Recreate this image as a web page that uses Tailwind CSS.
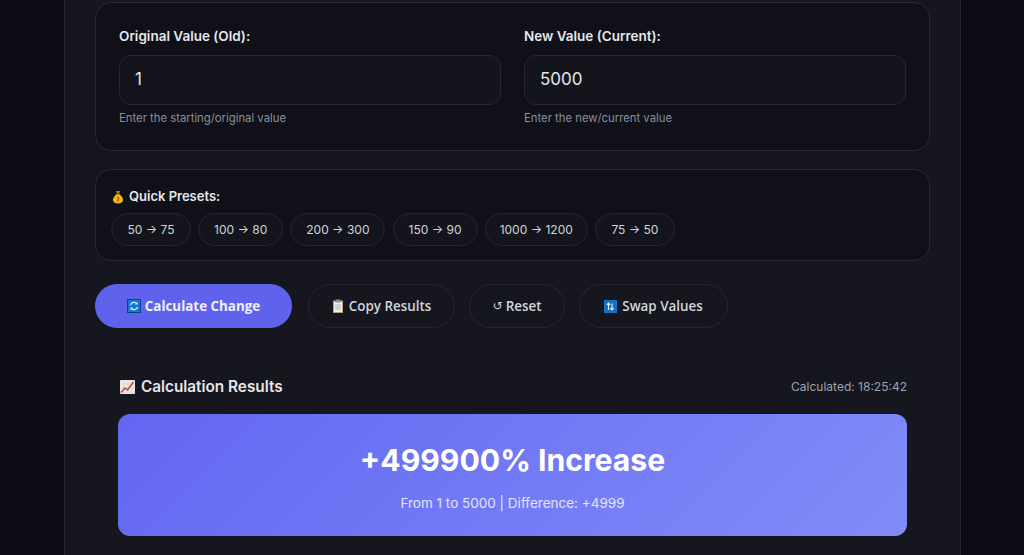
<!DOCTYPE html>
<html lang="en">
<head>
    <meta charset="UTF-8">
    <meta name="viewport" content="width=device-width, initial-scale=1.0">
    <title>Percentage Change Calculator</title>
    <script src="https://cdn.jsdelivr.net/npm/@tailwindcss/browser@4"></script>
</head>
<body class="bg-[#0c0d14] font-['Inter',sans-serif] text-[#e5e7eb] h-[555px] overflow-hidden">

    <!-- Main panel -->
    <main class="w-[897px] h-[555px] ml-[64px] pt-[2px] px-[30px] bg-[#15161e] border-x border-[#272933]">

        <!-- Inputs -->
        <section class="w-[835px] h-[149px] pt-[23px] px-[23px] grid grid-cols-2 gap-x-[23px] bg-[#0f1018] border border-[#272936] rounded-2xl">
            <div>
                <label class="block text-[13.500px] leading-[20px] font-semibold text-[#e5e7eb] mb-[9px]">Original Value (Old):</label>
                <div class="h-[50px] px-[15px] flex items-center bg-[#13141c] border border-[#252734] rounded-xl text-[17px] text-[#e5e7eb]">1</div>
                <p class="mt-[6px] text-[11.300px] leading-[15px] text-[#8b8f9c]">Enter the starting/original value</p>
            </div>
            <div>
                <label class="block text-[13.500px] leading-[20px] font-semibold text-[#e5e7eb] mb-[9px]">New Value (Current):</label>
                <div class="h-[50px] px-[15px] flex items-center bg-[#13141c] border border-[#252734] rounded-xl text-[17px] text-[#e5e7eb]">5000</div>
                <p class="mt-[6px] text-[11.300px] leading-[15px] text-[#8b8f9c]">Enter the new/current value</p>
            </div>
        </section>

        <!-- Presets -->
        <section class="w-[835px] h-[92px] mt-[18px] pt-[17px] px-[15px] bg-[#0f1018] border border-[#272936] rounded-2xl">
            <div class="flex items-center gap-[4px] h-[20px] text-[13px] font-semibold text-[#e5e7eb]">
                <svg class="w-[14px] h-[14px]" viewBox="0 0 14 14">
                    <path d="M5 1h4l-1 2.400H6z" fill="#b8860b"/>
                    <rect x="5.200" y="3.200" width="3.600" height="1" fill="#7a5a10"/>
                    <path d="M5.400 4.200h3.200C10.800 6 12 8 12 10c0 2.400-2 3.400-5 3.400S2 12.400 2 10c0-2 1.200-4 3.400-5.800z" fill="#f5b916"/>
                    <path d="M7 6.500v5M5.800 8c.8-.8 2.400-.6 2.400.4S5.800 9.400 5.800 10.300s1.600 1 2.400.3" fill="none" stroke="#8a6508" stroke-width=".8"/>
                </svg>
                <span>Quick Presets:</span>
            </div>
            <div class="flex gap-[7.200px] mt-[6px] text-[12px] text-[#d1d5db]">
                <button class="h-[33px] w-[80px] bg-[#13141c] border border-[#252734] rounded-full">50 → 75</button>
                <button class="h-[33px] w-[85px] bg-[#13141c] border border-[#252734] rounded-full">100 → 80</button>
                <button class="h-[33px] w-[95px] bg-[#13141c] border border-[#252734] rounded-full">200 → 300</button>
                <button class="h-[33px] w-[85px] bg-[#13141c] border border-[#252734] rounded-full">150 → 90</button>
                <button class="h-[33px] w-[103px] bg-[#13141c] border border-[#252734] rounded-full">1000 → 1200</button>
                <button class="h-[33px] w-[80px] bg-[#13141c] border border-[#252734] rounded-full">75 → 50</button>
            </div>
        </section>

        <!-- Actions -->
        <div class="flex mt-[23px] font-['Open_Sans',sans-serif] text-[13.400px] font-semibold text-[#d1d5db]">
            <button class="h-[44px] w-[197px] flex items-center justify-center gap-[4px] rounded-full bg-[#5f63ec] text-[#eef0ff] font-bold">
                <svg class="w-[14px] h-[14px]" viewBox="0 0 14 14">
                    <rect width="14" height="14" fill="#0b3f94"/>
                    <rect x="1" y="1" width="12" height="12" fill="#1677d2"/>
                    <path d="M3.500 6a3.600 3.600 0 0 1 6.300-1.300M10.500 8a3.600 3.600 0 0 1-6.300 1.300" fill="none" stroke="#d9f0ff" stroke-width="1.200"/>
                    <path d="M10.500 2.800v2.700H7.900zM3.500 11.200V8.500h2.600z" fill="#d9f0ff"/>
                </svg>
                Calculate Change
            </button>
            <button class="h-[44px] w-[147px] ml-[16px] flex items-center justify-center gap-[5px] rounded-full border border-[#252734]">
                <svg class="w-[12px] h-[14px]" viewBox="0 0 12 14">
                    <rect x="1" y="1.500" width="10" height="12.500" fill="#b8a27a"/>
                    <rect x="2" y="3" width="8" height="10" fill="#eeeeea"/>
                    <rect x="3.500" y="0.500" width="5" height="3" fill="#8c9297"/>
                    <path d="M3.200 6h5.600M3.200 8h5.600M3.200 10h5.600" stroke="#9aa79c" stroke-width=".8"/>
                </svg>
                Copy Results
            </button>
            <button class="h-[44px] w-[96px] ml-[14px] flex items-center justify-center gap-[3px] rounded-full border border-[#252734]">
                <span class="font-['DejaVu_Sans',sans-serif] font-normal text-[12px]">↺</span>
                Reset
            </button>
            <button class="h-[44px] w-[149px] ml-[14px] flex items-center justify-center gap-[5px] rounded-full border border-[#252734]">
                <svg class="w-[13px] h-[13px]" viewBox="0 0 13 13">
                    <rect width="13" height="13" fill="#1270c9"/>
                    <path d="M4.500 10V3M2.800 4.800 4.500 3l1.700 1.800M8 3.500V10M6.400 8.200 8 10l1.700-1.800" fill="none" stroke="#e3f2ff" stroke-width="1.100"/>
                </svg>
                Swap Values
            </button>
        </div>

        <!-- Results -->
        <section class="w-[789px] ml-[23px] mt-[47px]">
            <div class="flex items-center justify-between h-[24px] pl-[2px]">
                <h2 class="flex items-center gap-[6px] text-[15.300px] font-semibold text-[#e5e7eb]">
                    <svg class="w-[15px] h-[14px]" viewBox="0 0 15 14">
                        <rect width="15" height="14" rx="1" fill="#eceae6"/>
                        <path d="M4 0v14M8 0v14M12 0v14M0 4h15M0 8h15M0 12h15" stroke="#c9c9d0" stroke-width=".5"/>
                        <path d="M1 12.500 5 8l2.500 2L13.500 2" fill="none" stroke="#c9443a" stroke-width="1.500"/>
                    </svg>
                    Calculation Results
                </h2>
                <span class="text-[12px] text-[#9ca3af]">Calculated: 18:25:42</span>
            </div>
            <div class="h-[122px] mt-[15px] flex flex-col items-center rounded-xl bg-linear-135 from-[#6366f1] to-[#818cf8] text-white">
                <div class="mt-[25px] text-[30.200px] leading-[42px] font-bold">+499900% Increase</div>
                <div class="mt-[12px] text-[13.500px] leading-[20px] text-white/80">From 1 to 5000 | Difference: +4999</div>
            </div>
        </section>
    </main>
</body>
</html>
